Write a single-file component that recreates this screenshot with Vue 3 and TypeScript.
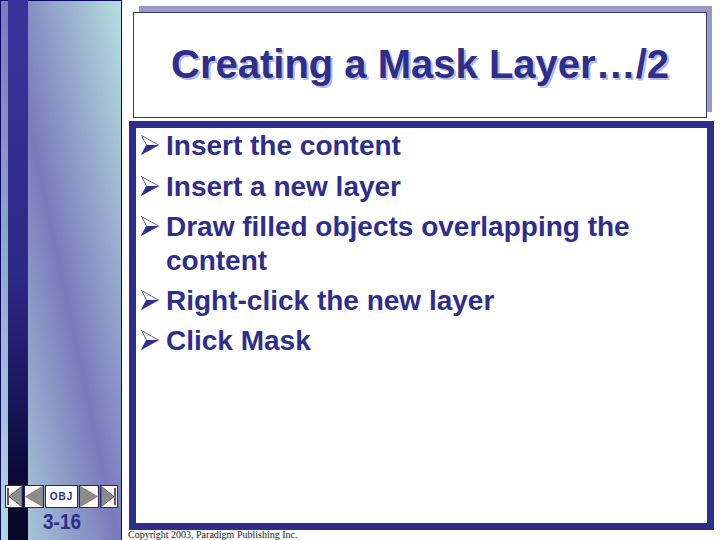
<script setup lang="ts">
const items: string[] = [
  'Insert the content',
  'Insert a new layer',
  'Draw filled objects overlapping the content',
  'Right-click the new layer',
  'Click Mask',
]
</script>

<template>
  <div class="slide">
    <aside class="side">
      <div class="stripe"></div>
      <div class="tools">
        <nav class="nav">
          <div class="btn end">
            <svg width="16" height="21" viewBox="0 0 16 21"><path d="M1 2h2v17H1z" fill="#5a5a78" /><path d="M15.500 .5v20L3 10.500z" fill="#8c8c88" stroke="#3a3a78" stroke-width=".7" /></svg>
          </div>
          <div class="btn arrow">
            <svg width="18" height="21" viewBox="0 0 18 21"><path d="M17.500 .5v20L.5 10.500z" fill="#8c8c88" stroke="#70708c" stroke-width=".7" /></svg>
          </div>
          <div class="btn obj">OBJ</div>
          <div class="btn arrow">
            <svg width="18" height="21" viewBox="0 0 18 21"><path d="M.5 .5v20l17-10z" fill="#8c8c88" stroke="#70708c" stroke-width=".7" /></svg>
          </div>
          <div class="btn end">
            <svg width="16" height="21" viewBox="0 0 16 21"><path d="M13 2h2v17h-2z" fill="#5a5a78" /><path d="M.5 .5v20L13 10.500z" fill="#8c8c88" stroke="#3a3a78" stroke-width=".7" /></svg>
          </div>
        </nav>
        <div class="page">3-16</div>
      </div>
    </aside>
    <main class="main">
      <header class="title-wrap">
        <div class="title-box">
          <h1>Creating a Mask Layer…/2</h1>
        </div>
      </header>
      <section class="content">
        <ul>
          <li v-for="item in items" :key="item">
            <svg class="bullet" width="18" height="20" viewBox="0 0 18 20">
              <path d="M.5 .5 17.500 10 .5 19.500 5.500 10Z" fill="#fff" stroke="#24246e" stroke-width=".7" />
              <path d="M.5 19.500 17.500 10H5.500Z" fill="#2e2e8c" />
            </svg>
            <span>{{ item }}</span>
          </li>
        </ul>
      </section>
      <footer class="copy">Copyright 2003, Paradigm Publishing Inc.</footer>
    </main>
  </div>
</template>

<style>
html, body { margin: 0; background: #fff; }
</style>

<style scoped>
.slide {
  width: 720px;
  height: 540px;
  display: flex;
  overflow: hidden;
  background: #fff;
  font-family: "Liberation Sans", Arial, sans-serif;
}
.side {
  position: relative;
  width: 121px;
  height: 540px;
  flex: none;
  border-right: 1px solid #0b0b66;
  background: linear-gradient(78deg, #b4dde0 0%, #7a7abc 50%, #b6e0e0 100%);
  box-shadow: inset 1px 1px 0 #0b0b66;
  display: flex;
  flex-direction: column;
  justify-content: flex-end;
}
.stripe {
  position: absolute;
  left: 8px;
  top: 0;
  width: 20px;
  height: 540px;
  background: linear-gradient(180deg, #39349c 0%, #2c2a86 50%, #1a1860 72%, #0b0a34 88%, #07072a 100%);
}
.tools {
  position: relative;
  padding-bottom: 8px;
}
.nav {
  display: flex;
  gap: 1px;
  padding-left: 5px;
  height: 23px;
}
.btn {
  box-sizing: border-box;
  height: 23px;
  border: 1px solid #25256e;
  background: #fdf6ec;
  display: flex;
  align-items: center;
  justify-content: center;
}
.end { width: 18px; }
.arrow { width: 20px; }
.obj {
  width: 33px;
  background: #fff;
  color: #2e2e8c;
  font-size: 10px;
  font-weight: 700;
  letter-spacing: 1px;
}
.page {
  margin-top: 3px;
  padding-left: 43px;
  color: #2e2e8c;
  font-size: 19px;
  font-weight: 700;
  line-height: 21px;
  transform: scaleY(1.17);
}
.main {
  flex: 1;
  display: flex;
  flex-direction: column;
  padding: 6px 6px 0 7px;
  min-width: 0;
}
.title-wrap {
  margin-left: 10px;
  background: #9898cc;
  height: 106px;
  width: 573px;
}
.title-box {
  position: relative;
  left: -6px;
  top: 6px;
  box-sizing: border-box;
  width: 574px;
  height: 106px;
  background: #fff;
  border: 1px solid #3a3a5c;
  display: flex;
  align-items: center;
  justify-content: center;
}
h1 {
  margin: 0;
  color: #2e2e8c;
  font-size: 40px;
  font-weight: 700;
  white-space: nowrap;
  text-shadow: 2px 2px 0 #b8bcd8;
  transform: translateY(-1px);
}
.content {
  margin-top: 9px;
  box-sizing: border-box;
  width: 585px;
  height: 409px;
  border: 7px solid #2e2e8c;
  background: #fff;
  padding: 1px 12px 0 5px;
}
ul {
  list-style: none;
  margin: 0;
  padding: 0;
}
li {
  display: flex;
  align-items: flex-start;
  gap: 7px;
  color: #2e2e8c;
  font-size: 28px;
  font-weight: 700;
  line-height: 34px;
  margin-bottom: 6px;
}
li:first-child {
  margin-bottom: 7px;
}
.bullet {
  flex: none;
  margin-top: 6px;
}
.copy {
  margin-left: -1px;
  font-family: "Liberation Serif", "Times New Roman", serif;
  font-size: 10px;
  line-height: 10px;
  color: #222;
}
</style>
